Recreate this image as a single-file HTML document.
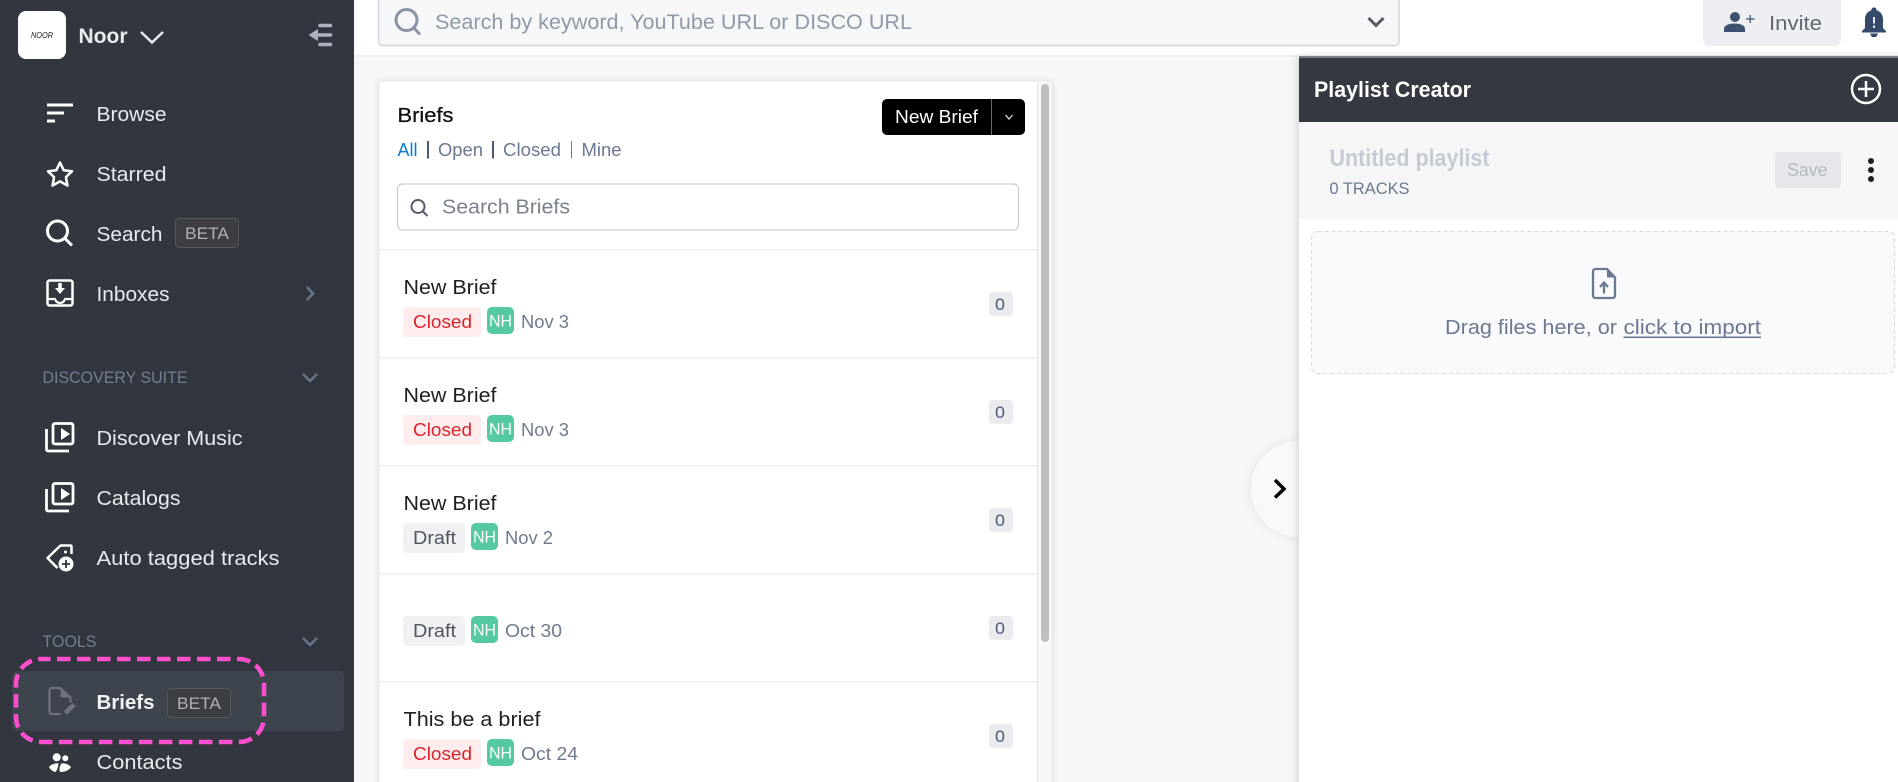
<!DOCTYPE html>
<html><head><meta charset="utf-8"><title>Briefs</title>
<style>
html,body{margin:0;padding:0;width:1898px;height:782px;overflow:hidden;background:#fff}
svg{display:block}
text{font-family:"Liberation Sans",sans-serif;white-space:pre}
.nav{font-size:20.5px;fill:#e8eaee}
.sec{font-size:16.5px;fill:#727f92}
.tab{font-size:18px;fill:#6b7890}
.ttl{font-size:20px;fill:#1d1f23}
.cl{font-size:18px;fill:#d9232e}
.dr{font-size:18px;fill:#4f5561}
.nh{font-size:17px;fill:#fff}
.dt{font-size:18px;fill:#6f7a8d}
.ct{font-size:17px;fill:#4f5b73}
</style></head><body>
<svg width="1898" height="782" viewBox="0 0 1898 782" xmlns="http://www.w3.org/2000/svg" fill="none">
<defs>
<filter id="ps" x="-5%" y="-5%" width="110%" height="110%"><feDropShadow dx="0" dy="0" stdDeviation="3" flood-color="#000" flood-opacity=".1"/></filter>
<filter id="rs" x="-3%" y="-3%" width="106%" height="106%"><feDropShadow dx="-2" dy="0" stdDeviation="4" flood-color="#000" flood-opacity=".13"/></filter>
<filter id="cs" x="-30%" y="-30%" width="160%" height="160%"><feDropShadow dx="-1" dy="0" stdDeviation="5" flood-color="#000" flood-opacity=".08"/></filter>
</defs>
<!-- backgrounds -->
<rect width="1898" height="782" fill="#f6f7f9"/>
<rect x="354" width="1544" height="56" fill="#fff"/>
<rect x="354" y="55" width="1544" height="2" fill="#eff1f3"/>

<!-- top search -->
<rect x="378.500" y="-8" width="1020.500" height="53.500" rx="4" fill="#f6f7f9" stroke="#d2d5da" stroke-width="1.500"/>
<circle cx="406.500" cy="20" r="10.500" stroke="#8a94a4" stroke-width="3"/>
<path d="M414 28l6 6.500" stroke="#8a94a4" stroke-width="3"/>
<text x="435" y="29" font-size="21" fill="#8f99a8" textLength="477" lengthAdjust="spacingAndGlyphs">Search by keyword, YouTube URL or DISCO URL</text>
<path d="M1368.500 18l7.500 7.500 7.500-7.500" stroke="#555b66" stroke-width="3"/>

<!-- invite -->
<path d="M1703 0h138v40a6 6 0 0 1-6 6h-126a6 6 0 0 1-6-6z" fill="#eeeff2"/>
<circle cx="1735" cy="17" r="5" fill="#3d5270"/>
<path d="M1724 32v-3c0-3.500 4-5.500 10.500-5.500s10.500 2 10.500 5.500v3z" fill="#3d5270"/>
<path d="M1746 19h8.500M1750.200 15v8" stroke="#3d5270" stroke-width="1.300"/>
<text x="1769" y="30" font-size="20" fill="#5f6672" textLength="53" lengthAdjust="spacingAndGlyphs">Invite</text>
<!-- bell -->
<path d="M1874 7.500c1.600 0 2.600 1 2.600 2.800 4.400 1.400 6.400 5 6.400 9.200v8.500l3 3v1.500h-24V31l3-3v-8.500c0-4.200 2-7.800 6.400-9.200 0-1.800 1-2.800 2.600-2.800z" fill="#35496a"/>
<path d="M1870 33.500h8l-1.800 3.500h-4.400z" fill="#35496a"/>
<path d="M1874 17v6.500M1874 25.500v2.500" stroke="#fff" stroke-width="1.800"/>

<!-- sidebar -->
<rect width="354" height="782" fill="#31363f"/>
<rect x="18" y="11" width="48" height="48" rx="8" fill="#fff"/>
<text x="31" y="38" font-size="8" font-style="italic" fill="#222" textLength="22" lengthAdjust="spacingAndGlyphs">NOOR</text>
<text x="78.500" y="43" font-size="21" font-weight="700" fill="#e9ebee" textLength="49" lengthAdjust="spacingAndGlyphs">Noor</text>
<path d="M141 32l11 10.500L163 32" stroke="#e9ebee" stroke-width="2.500"/>
<g stroke="#adb3bd" stroke-width="3.500" stroke-linecap="round"><path d="M320 25.500h10.500M316 35h14.500M320 44.500h10.500"/></g>
<path d="M308.500 35l9.500-6v12z" fill="#adb3bd"/>

<!-- nav icons -->
<g stroke="#fff" stroke-width="3" fill="none">
<path d="M47 105h26M47 113h17M47 121h8"/>
<path d="M60 162.500l3.700 7.700 8.300 1.100-6.100 5.800 1.600 8.400-7.500-4.100-7.500 4.100 1.600-8.400-6.100-5.800 8.300-1.100z" stroke-width="2.500" stroke-linejoin="round"/>
<circle cx="57.500" cy="231" r="10"/>
<path d="M65 238.500l7 7"/>
<rect x="47.500" y="280.500" width="25" height="25" rx="2" stroke-width="2.500"/>
<path d="M48 299h7c1 3 3 4 5 4s4-1 5-4h7" stroke-width="2.200"/>
<path d="M60 283v7" stroke-width="3.500"/>
<rect x="53" y="423.500" width="20" height="20.500" rx="2" stroke-width="2.800"/>
<path d="M46.500 429v20.500a1.500 1.500 0 0 0 1.500 1.500h21" stroke-width="2.800"/>
<rect x="53" y="483.500" width="20" height="20.500" rx="2" stroke-width="2.800"/>
<path d="M46.500 489v20.500a1.500 1.500 0 0 0 1.500 1.500h21" stroke-width="2.800"/>
<path d="M71.500 554v-7.500a1 1 0 0 0-1-1H60.500L47.500 558l10 10" stroke-width="2.500" stroke-linejoin="round"/>
</g>
<path d="M55 288h10l-5 6z" fill="#fff"/>
<path d="M61 428v12l9-6z" fill="#fff"/>
<path d="M61 488v12l9-6z" fill="#fff"/>
<circle cx="65.500" cy="552" r="1.500" fill="#fff"/>
<circle cx="66" cy="564" r="7.500" fill="#fff"/>
<path d="M66 560v8M62 564h8" stroke="#31363f" stroke-width="1.800"/>

<!-- nav text -->
<text class="nav" x="96.500" y="121" textLength="70" lengthAdjust="spacingAndGlyphs">Browse</text>
<text class="nav" x="96.500" y="181" textLength="70" lengthAdjust="spacingAndGlyphs">Starred</text>
<text class="nav" x="96.500" y="241" textLength="66" lengthAdjust="spacingAndGlyphs">Search</text>
<rect x="175.500" y="218.500" width="63" height="29" rx="4" fill="#3c3e44" stroke="#54575d"/>
<text x="185" y="239" font-size="17" fill="#aeb1b8" textLength="44" lengthAdjust="spacingAndGlyphs">BETA</text>
<text class="nav" x="96.500" y="301" textLength="73" lengthAdjust="spacingAndGlyphs">Inboxes</text>
<path d="M307 287l6 6.500-6 6.500" stroke="#67758a" stroke-width="2.500"/>

<text class="sec" x="42.500" y="383" textLength="145" lengthAdjust="spacingAndGlyphs">DISCOVERY SUITE</text>
<path d="M303 374l7 7 7-7" stroke="#67758a" stroke-width="2.500"/>
<text class="nav" x="96.500" y="445" textLength="146" lengthAdjust="spacingAndGlyphs">Discover Music</text>
<text class="nav" x="96.500" y="505" textLength="84" lengthAdjust="spacingAndGlyphs">Catalogs</text>
<text class="nav" x="96.500" y="565" textLength="183" lengthAdjust="spacingAndGlyphs">Auto tagged tracks</text>
<text class="sec" x="42.500" y="647" textLength="54" lengthAdjust="spacingAndGlyphs">TOOLS</text>
<path d="M303 638l7 7 7-7" stroke="#67758a" stroke-width="2.500"/>

<rect x="12" y="671" width="332" height="60" rx="5" fill="#3e444d"/>
<path d="M60 688h-8a2.500 2.500 0 0 0-2.500 2.500v21a2.500 2.500 0 0 0 2.500 2.500h8.500M60 688l10.500 9.500v5" stroke="#6f7480" stroke-width="2.200"/>
<path d="M60.500 688v9.500h10z" fill="#6f7480"/>
<path d="M65.500 713l8.500-8.500" stroke="#6f7480" stroke-width="4.500"/>
<text x="96.500" y="709" font-size="20.500" font-weight="700" fill="#f2f3f5" textLength="58" lengthAdjust="spacingAndGlyphs">Briefs</text>
<rect x="167.500" y="688.500" width="63" height="29" rx="4" fill="#3c3e44" stroke="#54575d"/>
<text x="177" y="709" font-size="17" fill="#aeb1b8" textLength="44" lengthAdjust="spacingAndGlyphs">BETA</text>

<circle cx="56.700" cy="757.300" r="4" fill="#fff"/>
<circle cx="65.300" cy="758.300" r="3" fill="#fff"/>
<path d="M49 767c2-2.500 5-3.800 9.500-3.800-.3 3.300-1 6.300-3 8.800-2.800-.5-5.300-2.500-6.500-5zM60 772c-1-3-.5-6 1.500-8.500 3.500-.5 7 .8 9.500 3.500-1.500 3-5.500 5-11 5z" fill="#fff"/>
<text class="nav" x="96.500" y="769" textLength="86" lengthAdjust="spacingAndGlyphs">Contacts</text>

<rect x="16" y="659" width="248" height="83" rx="25" stroke="#ff4fce" stroke-width="4.500" stroke-dasharray="13.500 6.500" stroke-dashoffset="4"/>

<!-- briefs panel -->
<rect x="379" y="81" width="673" height="720" rx="3" fill="#fff" stroke="#e7e9ec" filter="url(#ps)"/>
<rect x="1037" y="82" width="14.500" height="700" fill="#f8f8f8"/>
<rect x="1037" y="82" width="1" height="700" fill="#e3e5e8"/>
<rect x="1041" y="84" width="8" height="558" rx="4" fill="#bfbfbf"/>

<text x="397.500" y="122" font-size="20.500" fill="#111" stroke="#111" stroke-width=".3" textLength="56" lengthAdjust="spacingAndGlyphs">Briefs</text>
<text x="397.500" y="156" font-size="18" fill="#0a7ad1" textLength="20" lengthAdjust="spacingAndGlyphs">All</text>
<path d="M428 141v17.500M493 141v17.500" stroke="#4b5a72" stroke-width="2"/><path d="M571.500 141v17.500" stroke="#6b7890"/>
<text class="tab" x="438" y="156" textLength="45" lengthAdjust="spacingAndGlyphs">Open</text>
<text class="tab" x="503" y="156" textLength="58" lengthAdjust="spacingAndGlyphs">Closed</text>
<text class="tab" x="581.500" y="156" textLength="40" lengthAdjust="spacingAndGlyphs">Mine</text>

<rect x="882" y="99" width="143" height="36" rx="5" fill="#000"/>
<rect x="991" y="99" width="1" height="36" fill="#6b6b6b"/>
<text x="895" y="123" font-size="18" fill="#fff" textLength="83" lengthAdjust="spacingAndGlyphs">New Brief</text>
<path d="M1005.500 115l3.500 4 3.500-4" stroke="#ddd" stroke-width="1.300"/>

<rect x="397.500" y="184" width="621" height="46" rx="5" fill="#fff" stroke="#ccd0d6" stroke-width="1.300"/>
<circle cx="418" cy="206.500" r="6.500" stroke="#555b66" stroke-width="2"/>
<path d="M423 211.500l4.500 4.500" stroke="#555b66" stroke-width="2"/>
<text x="442" y="213.500" font-size="20.500" fill="#7a828e" textLength="128" lengthAdjust="spacingAndGlyphs">Search Briefs</text>

<g fill="#edeff1">
<rect x="379" y="249" width="658" height="1.500"/>
<rect x="379" y="357" width="658" height="1.500"/>
<rect x="379" y="465" width="658" height="1.500"/>
<rect x="379" y="573" width="658" height="1.500"/>
<rect x="379" y="681" width="658" height="1.500"/>
</g>

<!-- row 1 -->
<text class="ttl" x="403.500" y="294" textLength="93" lengthAdjust="spacingAndGlyphs">New Brief</text>
<rect x="403" y="307" width="78" height="30" rx="4" fill="#ffecec"/>
<text class="cl" x="413" y="328" textLength="59" lengthAdjust="spacingAndGlyphs">Closed</text>
<rect x="487" y="307" width="27" height="27" rx="5" fill="#55c9a0"/>
<text class="nh" x="489" y="326.500" textLength="23" lengthAdjust="spacingAndGlyphs">NH</text>
<text class="dt" x="521" y="328" textLength="48" lengthAdjust="spacingAndGlyphs">Nov 3</text>
<rect x="989" y="292" width="24" height="24" rx="4" fill="#e9ebee"/>
<text class="ct" x="995" y="310" textLength="10" lengthAdjust="spacingAndGlyphs">0</text>

<!-- row 2 -->
<text class="ttl" x="403.500" y="402" textLength="93" lengthAdjust="spacingAndGlyphs">New Brief</text>
<rect x="403" y="415" width="78" height="30" rx="4" fill="#ffecec"/>
<text class="cl" x="413" y="436" textLength="59" lengthAdjust="spacingAndGlyphs">Closed</text>
<rect x="487" y="415" width="27" height="27" rx="5" fill="#55c9a0"/>
<text class="nh" x="489" y="434.500" textLength="23" lengthAdjust="spacingAndGlyphs">NH</text>
<text class="dt" x="521" y="436" textLength="48" lengthAdjust="spacingAndGlyphs">Nov 3</text>
<rect x="989" y="400" width="24" height="24" rx="4" fill="#e9ebee"/>
<text class="ct" x="995" y="418" textLength="10" lengthAdjust="spacingAndGlyphs">0</text>

<!-- row 3 -->
<text class="ttl" x="403.500" y="510" textLength="93" lengthAdjust="spacingAndGlyphs">New Brief</text>
<rect x="403" y="523" width="62" height="30" rx="4" fill="#f0f1f3"/>
<text class="dr" x="413" y="544" textLength="43" lengthAdjust="spacingAndGlyphs">Draft</text>
<rect x="471" y="523" width="27" height="27" rx="5" fill="#55c9a0"/>
<text class="nh" x="473" y="542.500" textLength="23" lengthAdjust="spacingAndGlyphs">NH</text>
<text class="dt" x="505" y="544" textLength="48" lengthAdjust="spacingAndGlyphs">Nov 2</text>
<rect x="989" y="508" width="24" height="24" rx="4" fill="#e9ebee"/>
<text class="ct" x="995" y="526" textLength="10" lengthAdjust="spacingAndGlyphs">0</text>

<!-- row 4 -->
<rect x="403" y="616" width="62" height="30" rx="4" fill="#f0f1f3"/>
<text class="dr" x="413" y="637" textLength="43" lengthAdjust="spacingAndGlyphs">Draft</text>
<rect x="471" y="616" width="27" height="27" rx="5" fill="#55c9a0"/>
<text class="nh" x="473" y="635.500" textLength="23" lengthAdjust="spacingAndGlyphs">NH</text>
<text class="dt" x="505" y="637" textLength="57" lengthAdjust="spacingAndGlyphs">Oct 30</text>
<rect x="989" y="616" width="24" height="24" rx="4" fill="#e9ebee"/>
<text class="ct" x="995" y="634" textLength="10" lengthAdjust="spacingAndGlyphs">0</text>

<!-- row 5 -->
<text class="ttl" x="403.500" y="726" textLength="137" lengthAdjust="spacingAndGlyphs">This be a brief</text>
<rect x="403" y="739" width="78" height="30" rx="4" fill="#ffecec"/>
<text class="cl" x="413" y="760" textLength="59" lengthAdjust="spacingAndGlyphs">Closed</text>
<rect x="487" y="739" width="27" height="27" rx="5" fill="#55c9a0"/>
<text class="nh" x="489" y="758.500" textLength="23" lengthAdjust="spacingAndGlyphs">NH</text>
<text class="dt" x="521" y="760" textLength="57" lengthAdjust="spacingAndGlyphs">Oct 24</text>
<rect x="989" y="724" width="24" height="24" rx="4" fill="#e9ebee"/>
<text class="ct" x="995" y="742" textLength="10" lengthAdjust="spacingAndGlyphs">0</text>

<!-- toggle circle -->
<circle cx="1299" cy="489" r="48" fill="#f9f9fc" filter="url(#cs)"/>

<!-- right panel -->
<rect x="1299" y="56" width="620" height="740" fill="#fff" filter="url(#rs)"/>
<rect x="1299" y="56" width="599" height="66" fill="#343840"/>
<rect x="1299" y="56" width="599" height="2" fill="#7b7f85"/>
<text x="1314" y="97" font-size="22" font-weight="700" fill="#fff" textLength="157" lengthAdjust="spacingAndGlyphs">Playlist Creator</text>
<circle cx="1866" cy="89" r="14" stroke="#fff" stroke-width="2.500"/>
<path d="M1866 81v16M1858 89h16" stroke="#fff" stroke-width="2.500"/>
<rect x="1299" y="122" width="599" height="97" fill="#f5f6f8"/>
<text x="1329.500" y="166" font-size="24" font-weight="700" fill="#c5cad4" textLength="160" lengthAdjust="spacingAndGlyphs">Untitled playlist</text>
<text x="1329.500" y="194" font-size="16.500" fill="#6b7890" textLength="80" lengthAdjust="spacingAndGlyphs">0 TRACKS</text>
<rect x="1775" y="152" width="66" height="36" rx="4" fill="#e5e7eb"/>
<text x="1787" y="176" font-size="18" fill="#b3b8c2" textLength="40.500" lengthAdjust="spacingAndGlyphs">Save</text>
<circle cx="1871" cy="161" r="3" fill="#1c1f25"/>
<circle cx="1871" cy="170" r="3" fill="#1c1f25"/>
<circle cx="1871" cy="179" r="3" fill="#1c1f25"/>

<rect x="1311.500" y="231.500" width="583" height="142" rx="6" fill="#f9fafc" stroke="#d5d9e0" stroke-dasharray="4 3"/>
<path d="M1607 269h-11.500a2.500 2.500 0 0 0-2.500 2.500v24a2.500 2.500 0 0 0 2.500 2.500h17a2.500 2.500 0 0 0 2.500-2.500v-18z" stroke="#6b7890" stroke-width="2.300"/>
<path d="M1607 269l8 8.500h-8z" fill="#6b7890"/>
<path d="M1604 293.500v-10M1600 287l4-4.500 4 4.500" stroke="#6b7890" stroke-width="2.300"/>
<text x="1445" y="334" font-size="20" fill="#6b7890" textLength="172" lengthAdjust="spacingAndGlyphs">Drag files here, or</text>
<text x="1623.500" y="334" font-size="20" fill="#6b7890" textLength="137.500" lengthAdjust="spacingAndGlyphs">click to import</text>
<rect x="1623.500" y="336.500" width="137.500" height="1.600" fill="#6b7890"/>

<path d="M1275 480l9 9-9 8.500" stroke="#000" stroke-width="3.500"/>
</svg>
</body></html>
